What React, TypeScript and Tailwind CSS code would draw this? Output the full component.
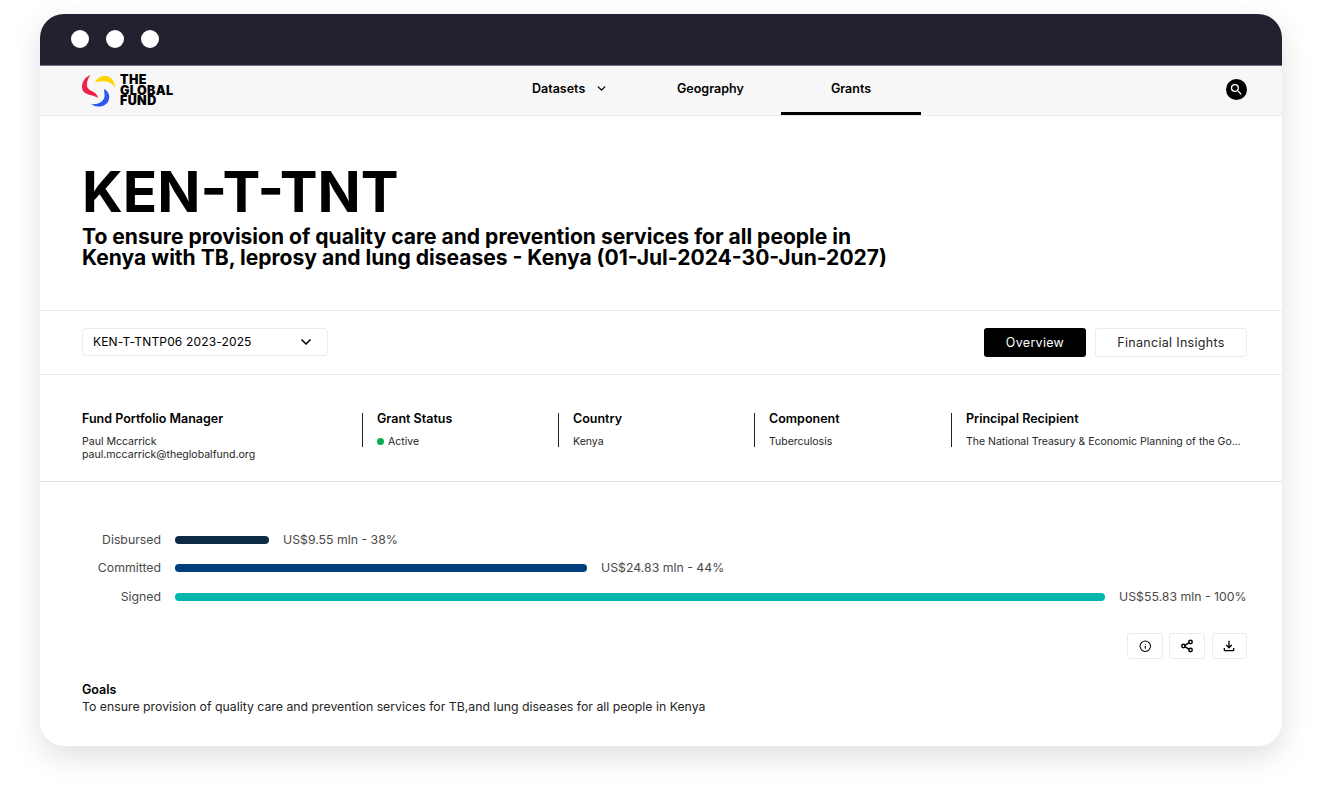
import { ChevronDown, Info, Share2 } from "lucide-react"
import { MdOutlineFileDownload, MdSearch } from "react-icons/md"

const details = [
  { title: "Grant Status", value: "Active", dot: true, width: "w-[196px]" },
  { title: "Country", value: "Kenya", width: "w-[196px]" },
  { title: "Component", value: "Tuberculosis", width: "w-[197px]" },
  { title: "Principal Recipient", value: "The National Treasury & Economic Planning of the Go...", width: "w-[296px]" },
]

const bars = [
  { label: "Disbursed", value: "US$9.55 mln - 38%", width: "w-[94px]", color: "bg-[#0d2b45]" },
  { label: "Committed", value: "US$24.83 mln - 44%", width: "w-[412px]", color: "bg-[#003d7c]" },
  { label: "Signed", value: "US$55.83 mln - 100%", width: "w-[930px]", color: "bg-[#00b8ab]" },
]

function Logo() {
  return (
    <div className="flex items-start gap-[4px]">
      <svg width="34" height="32" viewBox="0 0 34 32">
        <path d="M8.500 0C3 2 0 7 0 12C0 17 4 19 8 20C11 20.800 14 21.500 16 23C15.500 19 12 17 8.500 15.500C6 14 4.500 12 5 8.500C5.300 5.500 6.500 2.500 8.500 0Z" fill="#ee2347" />
        <path d="M13 7.500C15 3 19 .5 24 1C29 1.500 33 6 33 12.500C31 9 28 7 24 6.500C20 6 16 6 13 7.500Z" fill="#ffd500" />
        <path d="M22 14C26 16 28 20 27 24C26 29 21 32 16 31.500C13 31.200 11 30.500 9 29C12 29.500 16 29 19 27C22 25 23 22 22.500 19C22.300 17 22 15.500 22 14Z" fill="#3057f2" />
      </svg>
      <div className="text-[12.500px] leading-[10.500px] font-black text-black tracking-[0.4px]">
        <div>THE</div>
        <div>GLOBAL</div>
        <div>FUND</div>
      </div>
    </div>
  )
}

export default function App() {
  return (
    <div className="h-[811px] bg-white pt-[14px] pl-[40px] font-['Inter',sans-serif] text-black overflow-hidden">
      <div className="w-[1242px] h-[732px] bg-white rounded-[24px] overflow-hidden shadow-[0_10px_30px_rgba(0,0,0,0.13)]">
        {/* Window bar */}
        <div className="h-[52px] bg-[#252030] border-b border-[#6f7488] flex items-start gap-[17px] pl-[31px] pt-[15.500px]">
          <span className="w-[18px] h-[18px] rounded-full bg-white" />
          <span className="w-[18px] h-[18px] rounded-full bg-white" />
          <span className="w-[18px] h-[18px] rounded-full bg-white" />
        </div>

        {/* Nav */}
        <div className="h-[50px] bg-[#f7f7f7] border-b border-[#ebebeb] flex pl-[42px] pr-[35px]">
          <div className="w-[450px] pt-[9px]">
            <Logo />
          </div>
          <div className="flex text-[12.500px] font-semibold">
            <div className="w-[145px] flex items-start pt-[14px] gap-[10px]">
              <span>Datasets</span>
              <ChevronDown size={13} strokeWidth={2.500} className="mt-[2px]" />
            </div>
            <div className="w-[104px] pt-[14px]">Geography</div>
            <div className="w-[140px] h-[49px] border-b-[3px] border-black pt-[14px] text-center">Grants</div>
          </div>
          <div className="ml-auto pt-[13px]">
            <div className="w-[21px] h-[21px] rounded-full bg-black flex items-center justify-center">
              <MdSearch size={15} className="text-white" />
            </div>
          </div>
        </div>

        {/* Heading */}
        <div className="h-[195px] border-b border-[#ebebeb] pl-[42px] pt-[46px]">
          <h1 className="text-[56.700px] leading-[60px] font-bold">KEN-T-TNT</h1>
          <p className="mt-[4px] w-[830px] text-[21.050px] leading-[21px] font-bold">
            To ensure provision of quality care and prevention services for all people in Kenya with TB, leprosy and lung diseases - Kenya (01-Jul-2024-30-Jun-2027)
          </p>
        </div>

        {/* Selector + tabs */}
        <div className="h-[64px] border-b border-[#ebebeb] flex items-start justify-between pl-[42px] pr-[35px] pt-[17px]">
          <button className="w-[246px] h-[28px] border border-[#ebebeb] rounded-[4px] flex items-center justify-between pl-[10px] pr-[13px] text-[12px] tracking-[0.15px]">
            <span>KEN-T-TNTP06 2023-2025</span>
            <ChevronDown size={16} strokeWidth={2.500} />
          </button>
          <div className="flex gap-[9px] text-[12.500px] tracking-[0.3px]">
            <button className="w-[102px] h-[29px] pt-[1px] rounded-[3px] bg-black text-white">Overview</button>
            <button className="w-[152px] h-[29px] pt-[1px] rounded-[3px] border border-[#ebebeb] text-[#252525]">Financial Insights</button>
          </div>
        </div>

        {/* Details */}
        <div className="h-[107px] border-b border-[#e3e3e3] flex pl-[42px] pt-[36px]">
          <div className="w-[280px]">
            <div className="text-[12.500px] leading-[16px] font-semibold">Fund Portfolio Manager</div>
            <div className="mt-[8px] text-[10.550px] leading-[13px] text-[#252525]">
              <div>Paul Mccarrick</div>
              <div>paul.mccarrick@theglobalfund.org</div>
            </div>
          </div>
          {details.map((item) => (
            <div key={item.title} className={`${item.width} h-[34px] mt-[2px] border-l border-[#222] pl-[14px]`}>
              <div className="-mt-[2px] text-[12.500px] leading-[16px] font-semibold">{item.title}</div>
              <div className="mt-[8px] flex items-center gap-[4px] text-[10.500px] leading-[13px] text-[#252525] whitespace-nowrap">
                {item.dot && <span className="w-[7px] h-[7px] rounded-full bg-[#0aad50]" />}
                <span>{item.value}</span>
              </div>
            </div>
          ))}
        </div>

        {/* Budget bars */}
        <div className="pl-[42px] pr-[35px] pt-[50px]">
          <div className="flex flex-col gap-[12.500px]">
            {bars.map((bar) => (
              <div key={bar.label} className="flex items-center h-[16px] text-[12.300px] text-[#4a4a4a]">
                <div className="w-[79px] shrink-0 text-right">{bar.label}</div>
                <div className={`ml-[14px] -mt-[1px] h-[8px] rounded-full shrink-0 ${bar.width} ${bar.color}`} />
                <div className="ml-[14px] whitespace-nowrap">{bar.value}</div>
              </div>
            ))}
          </div>
          <div className="mt-[28px] flex justify-end gap-[6.750px]">
            <button className="w-[35.500px] h-[26px] rounded-[3px] border border-[#ebebeb] flex items-center justify-center">
              <Info size={12.500} strokeWidth={2} />
            </button>
            <button className="w-[35.500px] h-[26px] rounded-[3px] border border-[#ebebeb] flex items-center justify-center">
              <Share2 size={14} strokeWidth={2.500} />
            </button>
            <button className="w-[35.500px] h-[26px] rounded-[3px] border border-[#ebebeb] flex items-center justify-center">
              <MdOutlineFileDownload size={16} />
            </button>
          </div>
          <div className="mt-[23px] text-[12.500px] leading-[16px] font-semibold">Goals</div>
          <div className="mt-[1px] text-[12.300px] leading-[16px] text-[#252525]">
            To ensure provision of quality care and prevention services for TB,and lung diseases for all people in Kenya
          </div>
        </div>
      </div>
    </div>
  )
}
